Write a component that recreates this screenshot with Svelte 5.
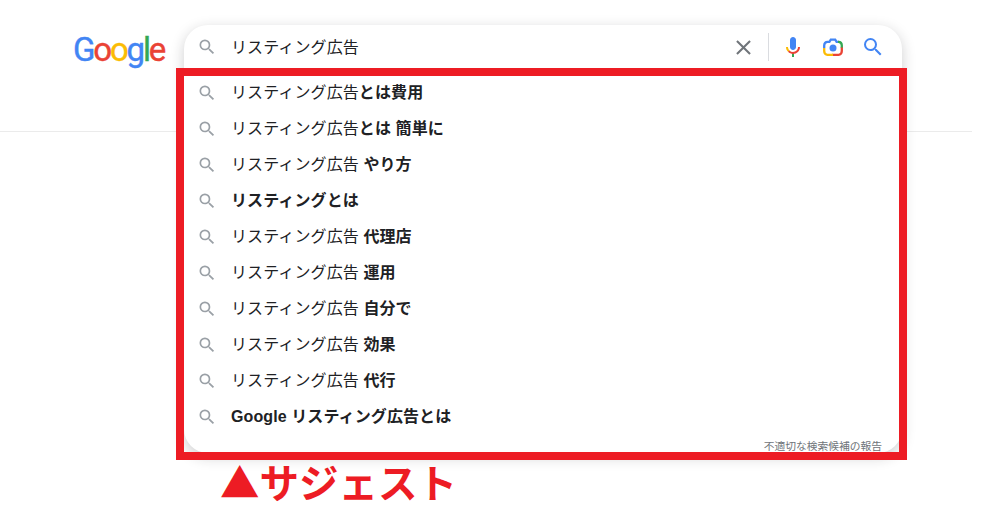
<script>
  const suggestions = [
    { plain: "リスティング広告", bold: "とは費用" },
    { plain: "リスティング広告", bold: "とは 簡単に" },
    { plain: "リスティング広告", bold: " やり方" },
    { plain: "", bold: "リスティングとは" },
    { plain: "リスティング広告", bold: " 代理店" },
    { plain: "リスティング広告", bold: " 運用" },
    { plain: "リスティング広告", bold: " 自分で" },
    { plain: "リスティング広告", bold: " 効果" },
    { plain: "リスティング広告", bold: " 代行" },
    { plain: "", bold: "Google リスティング広告とは" }
  ];

  const searchPath =
    "M15.5 14h-.79l-.28-.27A6.471 6.471 0 0 0 16 9.5 6.5 6.5 0 1 0 9.5 16c1.61 0 3.09-.59 4.23-1.57l.27.28v.79l5 4.99L20.49 19l-4.99-5zm-6 0C7.01 14 5 11.99 5 9.5S7.01 5 9.5 5 14 7.01 14 9.5 11.99 14 9.5 14z";
</script>

<div class="page">
  <header class="header">
    <div class="logo" aria-label="Google">
      <span class="blue">G</span><span class="red">o</span><span class="yellow">o</span><span class="blue">g</span><span class="green">l</span><span class="red">e</span>
    </div>

    <div class="search-card">
      <div class="search-row">
        <svg class="icon-small" viewBox="0 0 24 24"><path d={searchPath} /></svg>
        <span class="query">リスティング広告</span>
        <svg class="icon-clear" viewBox="0 0 24 24">
          <path d="M19 6.41L17.59 5 12 10.59 6.41 5 5 6.41 10.59 12 5 17.59 6.41 19 12 13.41 17.59 19 19 17.59 13.41 12z" />
        </svg>
        <span class="sep"></span>
        <svg class="icon-btn mic" viewBox="0 0 24 24">
          <path fill="#4285f4" d="m12 15c1.66 0 3-1.31 3-2.97v-7.02c0-1.66-1.34-3.01-3-3.01s-3 1.34-3 3.01v7.02c0 1.66 1.34 2.97 3 2.97z" />
          <path fill="#34a853" d="m11 18.08h2v3.92h-2z" />
          <path fill="#fbbc05" d="m7.05 16.87c-1.27-1.33-2.05-2.83-2.05-4.87h2c0 1.45 0.56 2.42 1.47 3.38v0.32l-1.15 1.18z" />
          <path fill="#ea4335" d="m12 16.93a4.97 5.25 0 0 1 -3.54 -1.55l-1.41 1.49c1.26 1.34 3.02 2.13 4.95 2.13 3.87 0 6.99-2.92 6.99-6.99h-2c0 2.87-2.07 4.92-4.99 4.92z" />
        </svg>
        <svg class="icon-btn lens" viewBox="0 0 24 24" fill="none" stroke-width="2.3">
          <path stroke="#4285f4" d="M3.2 13V10.5C3.2 8.4 4.6 6.8 6.4 6.8H8.4L9.8 4.6H14.2L15.6 6.8H18" />
          <path stroke="#34a853" d="M17 6.8H17.6C19.6 6.8 20.8 8.4 20.8 10.5V13" />
          <path stroke="#ea4335" d="M20.8 12.5V16C20.8 18.2 19.4 19.8 17.6 19.8H11" />
          <path stroke="#fbbc05" d="M12 19.8H6.4C4.6 19.8 3.2 18.2 3.2 16V13" />
          <circle cx="12" cy="13" r="3.5" fill="#4285f4" />
        </svg>
        <svg class="icon-btn go" viewBox="0 0 24 24"><path d={searchPath} /></svg>
      </div>

      <ul class="list">
        {#each suggestions as s}
          <li class="item">
            <svg class="icon-small" viewBox="0 0 24 24"><path d={searchPath} /></svg>
            <span class="item-text">{s.plain}<b>{s.bold}</b></span>
          </li>
        {/each}
      </ul>

      <div class="report">不適切な検索候補の報告</div>

      <!-- red annotation drawn over the dropdown -->
      <div class="frame"></div>
    </div>
  </header>

  <div class="caption">▲サジェスト</div>
</div>

<style>
  :global(body) {
    margin: 0;
    background: #fff;
  }

  .page {
    width: 996px;
    height: 510px;
    overflow: hidden;
    font-family: "Liberation Sans", "Noto Sans CJK JP", sans-serif;
    color: #202124;
  }

  .header {
    display: flex;
    align-items: flex-start;
    box-sizing: border-box;
    width: 972px;
    height: 132px;
    padding: 25px 0 0 73px;
    border-bottom: 1px solid #ebebeb;
  }

  .logo {
    flex: none;
    width: 111px;
    height: 44px;
    font-family: Roboto, sans-serif;
    font-weight: 400;
    font-size: 33px;
    line-height: 49px;
    letter-spacing: -2.2px;
    white-space: nowrap;
    -webkit-text-stroke: 0.4px currentColor;
  }

  .blue { color: #4285f4; }
  .red { color: #ea4335; }
  .yellow { color: #fbbc05; }
  .green { color: #34a853; }

  .search-card {
    position: relative;
    flex: none;
    width: 718px;
    height: 428px;
    box-sizing: border-box;
    background: #fff;
    border-radius: 24px;
    box-shadow: 0 4px 14px rgba(32, 33, 36, 0.22);
  }

  .search-row {
    display: flex;
    align-items: center;
    height: 44px;
    padding: 0 17px 0 13px;
  }

  .query {
    flex: 1;
    margin-left: 14px;
    padding-bottom: 2px;
    font-size: 16px;
    letter-spacing: 0.1px;
  }

  .icon-small {
    flex: none;
    width: 20px;
    height: 20px;
    fill: #9aa0a6;
  }

  .item .icon-small {
    margin-top: 2px;
  }

  .icon-clear {
    flex: none;
    width: 25px;
    height: 25px;
    fill: #70757a;
  }

  .sep {
    flex: none;
    width: 1px;
    height: 28px;
    margin: 0 12px 0 12px;
    background: #dadce0;
  }

  .icon-btn {
    flex: none;
    width: 24px;
    height: 24px;
  }

  .mic {
    margin-right: 16px;
  }

  .go {
    margin-left: 16px;
    fill: #4285f4;
  }

  .list {
    list-style: none;
    margin: 5px 0 0;
    padding: 0;
  }

  .item {
    display: flex;
    align-items: center;
    height: 36px;
    padding-left: 13px;
  }

  .item-text {
    margin-left: 14px;
    padding-bottom: 2px;
    font-size: 16px;
    letter-spacing: 0.1px;
    white-space: pre;
  }

  .item-text b {
    font-weight: 700;
  }

  .report {
    margin: 5px 20px 0 0;
    text-align: right;
    font-size: 10.75px;
    line-height: 14px;
    color: #70757a;
  }

  .frame {
    position: absolute;
    top: 43px;
    left: -8px;
    right: -5px;
    bottom: -7px;
    border: 8px solid #ed1c24;
    pointer-events: none;
  }

  .caption {
    margin: 326px 0 0 220px;
    font-family: "Noto Sans CJK JP", sans-serif;
    font-size: 39.5px;
    line-height: 46px;
    font-weight: 700;
    color: #ed1c24;
    white-space: nowrap;
  }
</style>
